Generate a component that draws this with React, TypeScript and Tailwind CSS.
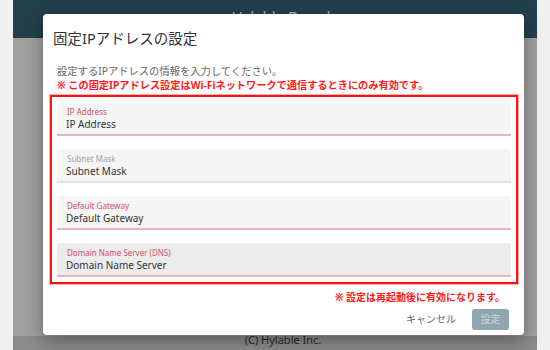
import { useState } from "react";

const jp = { fontFamily: "'Noto Sans', 'Noto Sans CJK JP', sans-serif" };

type Field = { label: string; value: string; active: boolean; hover?: boolean };

const fields: Field[] = [
  { label: "IP Address", value: "IP Address", active: true },
  { label: "Subnet Mask", value: "Subnet Mask", active: false },
  { label: "Default Gateway", value: "Default Gateway", active: true },
  { label: "Domain Name Server (DNS)", value: "Domain Name Server", active: true, hover: true },
];

function TextField({ f }: { f: Field }) {
  return (
    <div
      className={
        "h-[34px] rounded-t-[3px] border-b-2 pl-[9px] flex flex-col " +
        (f.hover ? "bg-[#ececec] " : "bg-[#f5f5f5] ") +
        (f.active ? "border-[#e8b4be]" : "border-[#e2e2e2]")
      }
    >
      <div
        className={
          "mt-[5px] text-[8px] leading-[10px] pl-[1px] " +
          (f.active ? "text-[#d24d6c]" : "text-[#a3a3a3]")
        }
      >
        {f.label}
      </div>
      <div className="text-[10px] leading-[14px] text-[#333]">{f.value}</div>
    </div>
  );
}

export default function App() {
  const [rows] = useState(fields);

  return (
    <div className="relative w-[550px] h-[350px] overflow-hidden bg-[#f0f0f0]" style={jp}>
      {/* app behind the overlay */}
      <div className="mx-[13px] h-full flex flex-col">
        <div className="h-[38px] bg-[#22404c] flex justify-center pt-[6px]">
          <span className="text-[15px] leading-[20px] text-[#aab4b9] ml-[12px]">Hylable Board</span>
        </div>
        <div className="flex-1 bg-[#9f9f9f]" />
        <div className="h-[14px] bg-[#8b8b8b] flex justify-center">
          <span className="text-[11px] leading-[12px] text-[#2a2a2a] -mt-[2px] ml-[16px]">(C) Hylable Inc.</span>
        </div>
      </div>

      {/* dialog */}
      <div className="absolute left-[43px] top-[14px] w-[481px] h-[321px] bg-white rounded-[4px] shadow-[0_6px_18px_rgba(0,0,0,0.35)] flex flex-col">
        <div className="pl-[10px] pt-[14px] text-[14.5px] leading-[20px] text-[#333]">固定IPアドレスの設定</div>
        <div className="pl-[14px] mt-[17px] text-[10.3px] leading-[13px] text-[#666]">
          設定するIPアドレスの情報を入力してください。
        </div>
        <div className="pl-[14px] mt-[1px] text-[10.2px] leading-[13px] font-bold text-[#ff1a1a]">
          ※ この固定IPアドレス設定はWi-Fiネットワークで通信するときにのみ有効です。
        </div>
        <div className="mx-[7px] mr-[6px] mt-[3px] border-2 border-[#ff1010] outline outline-1 outline-[#ffb0b0] p-[5px] flex flex-col gap-[13px]">
          {rows.map((f) => (
            <TextField key={f.label} f={f} />
          ))}
        </div>
        <div className="mt-[7px] pr-[19px] text-right text-[10px] leading-[13px] font-bold text-[#ff1a1a]">
          ※ 設定は再起動後に有効になります。
        </div>
        <div className="mt-[5px] pr-[15px] flex justify-end items-center gap-[16px]">
          <span className="text-[10px] text-[#666]">キャンセル</span>
          <button className="w-[37px] h-[21px] rounded-[3px] bg-[#8fa5b0] text-[10px] text-[#cbd6dc]">
            設定
          </button>
        </div>
      </div>
    </div>
  );
}
